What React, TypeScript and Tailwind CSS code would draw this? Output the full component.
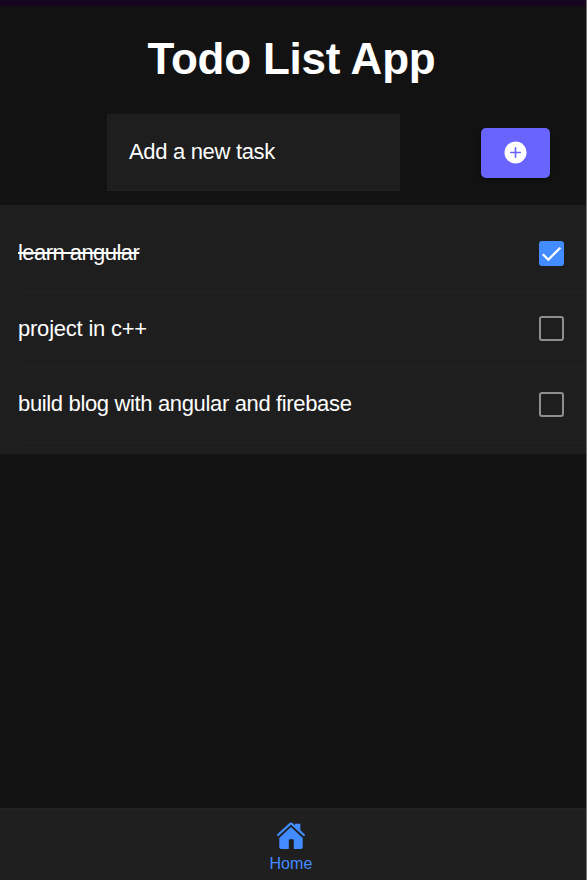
type Task = { title: string; done: boolean; tracking: string };

const tasks: Task[] = [
  { title: "learn angular", done: true, tracking: "tracking-[-0.55px]" },
  { title: "project in c++", done: false, tracking: "tracking-[-0.22px]" },
  { title: "build blog with angular and firebase", done: false, tracking: "tracking-[-0.35px]" },
];

function AddCircleIcon() {
  return (
    <svg viewBox="0 0 23 23" className="size-[23px]">
      <circle cx="11.5" cy="11.5" r="11" fill="#fff" />
      <path d="M11.5 6.7v9.6M6.7 11.5h9.6" stroke="#6a64ff" strokeWidth="1.6" strokeLinecap="round" />
    </svg>
  );
}

function HomeIcon() {
  return (
    <svg viewBox="0 0 30 30" className="size-[30px]" fill="currentColor">
      <path d="M15 6.1 26.7 16.9V26q0 2-2 2h-6.9v-8.9q0-.8-.8-.8h-3.4q-.8 0-.8.8V28H5.3q-2 0-2-2v-9.1Z" />
      <path d="M19 2.8h5.3v8.4l-5.3-4.8Z" />
      <path
        d="M2.1 14 14.2 2.9q.8-.7 1.6 0L27.9 14"
        fill="none"
        stroke="currentColor"
        strokeWidth="2.2"
        strokeLinecap="round"
      />
    </svg>
  );
}

function Checkbox({ checked }: { checked: boolean }) {
  if (!checked) {
    return <span className="size-[25px] shrink-0 rounded-[3px] border-2 border-[#8e8e8e]" />;
  }
  return (
    <span className="size-[25px] shrink-0 rounded-[3px] bg-[#428cff]">
      <svg viewBox="0 0 25 25" className="size-[25px]" fill="none" stroke="#fff" strokeWidth="2.3">
        <path d="M3.8 13.2 9.3 18.7 21.3 6.7" />
      </svg>
    </span>
  );
}

function TaskRow({ task }: { task: Task }) {
  return (
    <li className="ml-[18px] flex h-[75.6px] items-center justify-between border-b border-[#222222] pr-[22px]">
      <span className={`${task.tracking} ${task.done ? "line-through" : ""}`}>{task.title}</span>
      <Checkbox checked={task.done} />
    </li>
  );
}

export default function App() {
  return (
    <div className="flex h-[880px] w-[587px] flex-col border-r border-[#777777] bg-[#121212] font-['Liberation_Sans',Arial,sans-serif] text-[22px] leading-[26px] text-white">
      <div className="h-1.5 shrink-0 bg-[#17051f]" />
      <h1 className="mt-7 pr-[3px] text-center text-[44px] leading-[50px] font-bold tracking-[-0.22px]">
        Todo List App
      </h1>
      <form className="mt-[30px] flex h-[77px] items-center justify-between pr-9 pl-[107px]">
        <div className="flex h-[77px] w-[293px] items-center border-b border-[#222222] bg-[#1e1e1e] pl-[22px] tracking-[-0.32px]">
          Add a new task
        </div>
        <button
          type="button"
          aria-label="Add task"
          className="flex h-[50px] w-[69px] items-center justify-center rounded-[5px] bg-[#6a64ff] shadow-[0_3px_4px_rgba(0,0,0,0.4)]"
        >
          <AddCircleIcon />
        </button>
      </form>
      <ul className="mt-3.5 h-[249px] bg-[#1e1e1e] pt-[11px]">
        {tasks.map((task) => (
          <TaskRow key={task.title} task={task} />
        ))}
      </ul>
      <nav className="mt-auto flex h-[72px] flex-col items-center border-t border-[#232323] bg-[#1f1f1f] pt-3 pr-1 text-[#428cff]">
        <HomeIcon />
        <span className="mt-0.5 text-[16px] leading-[22px] tracking-[0.1px]">Home</span>
      </nav>
    </div>
  );
}
